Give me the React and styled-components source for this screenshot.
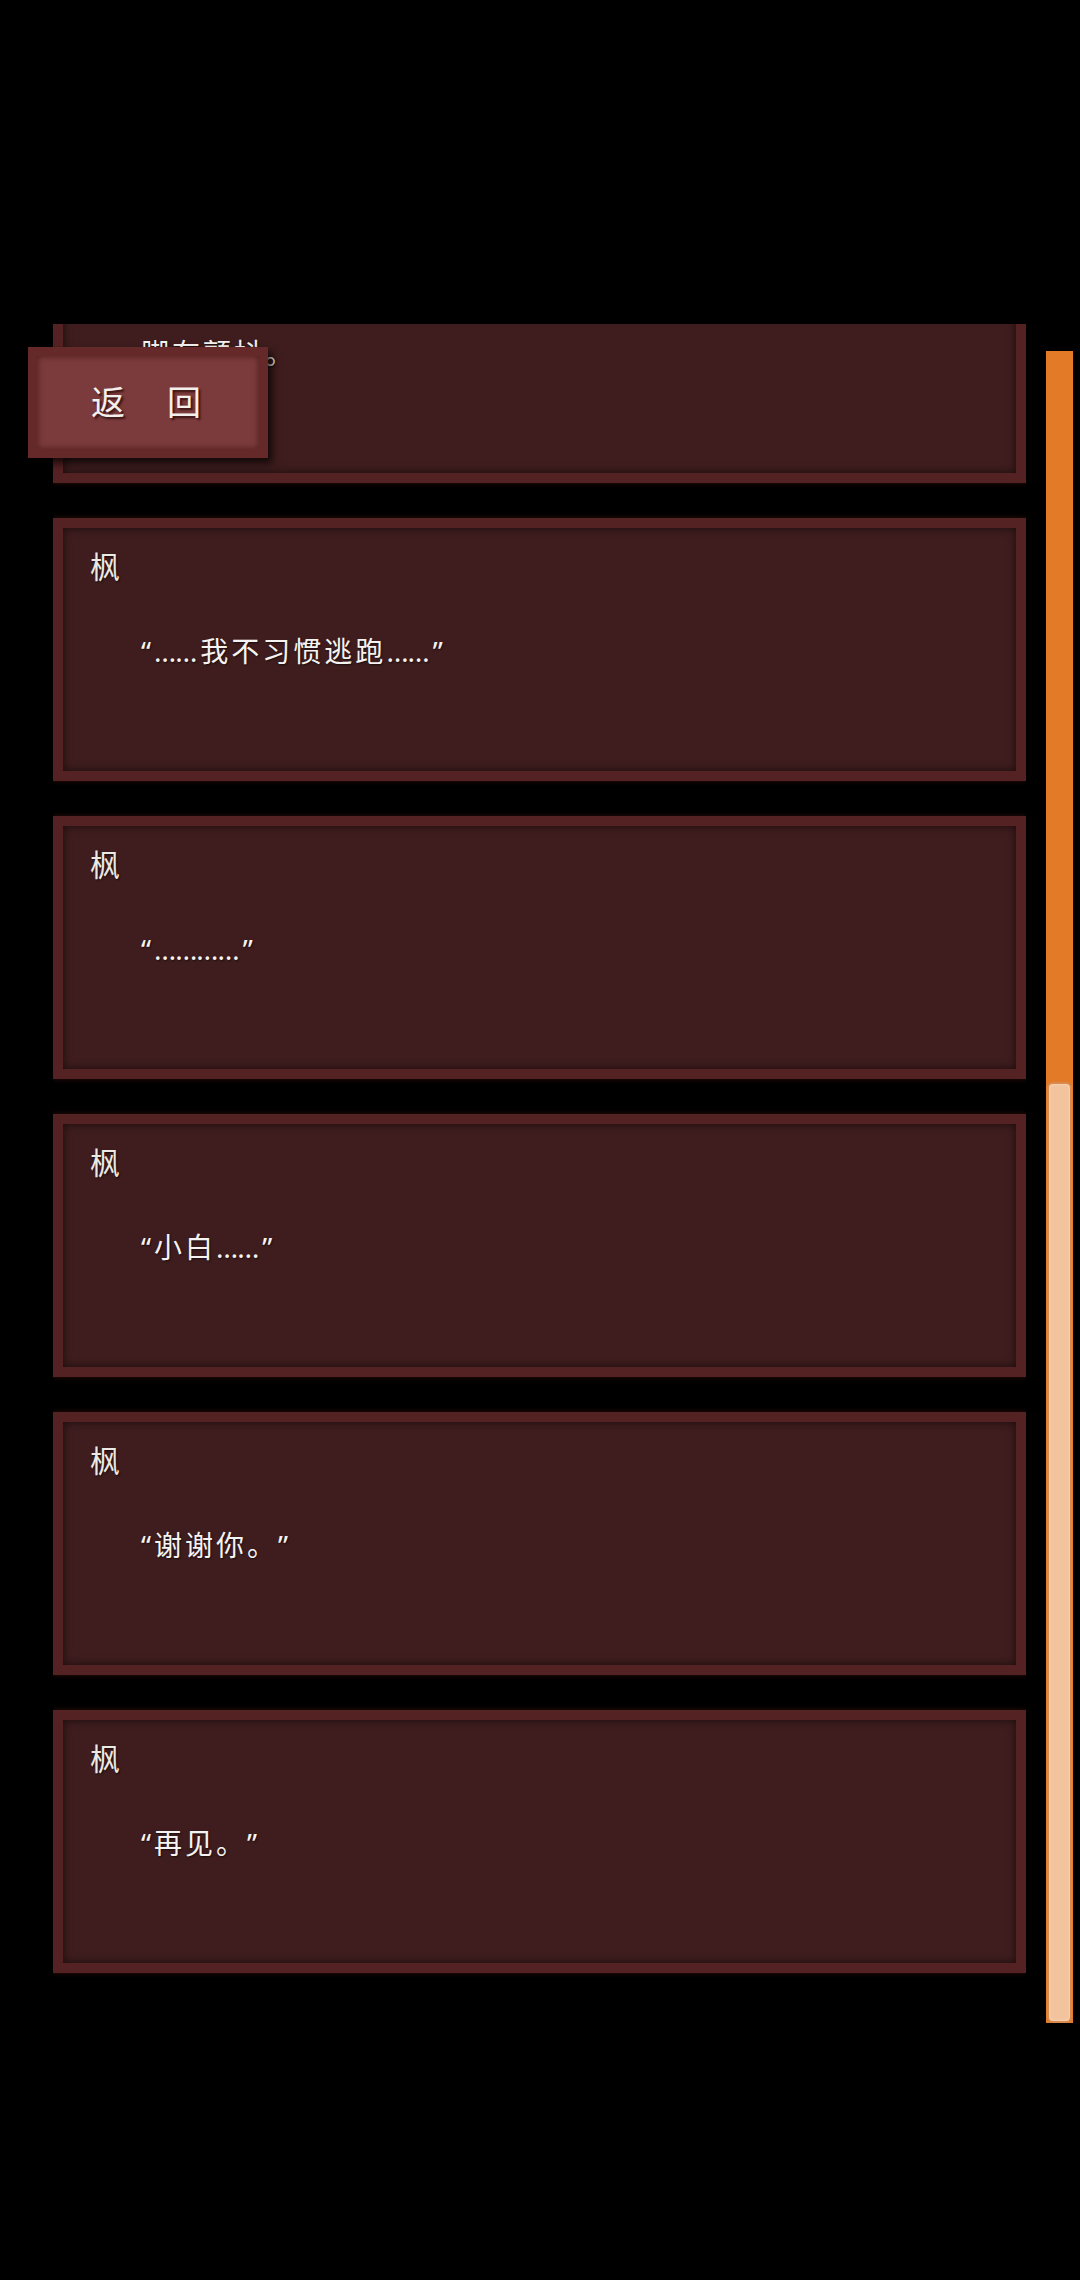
import React from 'react';
import styled, { createGlobalStyle } from 'styled-components';

const Global = createGlobalStyle`
  html, body { margin: 0; padding: 0; background: #000; }
  body {
    width: 1080px;
    height: 2280px;
    overflow: hidden;
    font-family: "Noto Sans", "Noto Sans CJK SC", sans-serif;
  }
`;

const Screen = styled.div`
  position: relative;
  width: 1080px;
  height: 2280px;
  background: #000;
`;

const Body = styled.div`
  display: flex;
  align-items: flex-start;
  gap: 20px;
  padding: 324px 0 0 53px;
`;

const LogList = styled.div`
  width: 973px;
  height: 1666px;
  box-sizing: border-box;
  padding-bottom: 17px;
  overflow: hidden;
  display: flex;
  flex-direction: column;
  justify-content: flex-end;
  gap: 35px;
`;

const Card = styled.div`
  flex-shrink: 0;
  height: 263px;
  box-sizing: border-box;
  border: 10px solid #552223;
  background: #3f1d1e;
  box-shadow: 0 0 5px rgba(110, 35, 35, 0.45), inset 0 0 10px rgba(0, 0, 0, 0.6);
  padding: 21px 20px 0 27px;
`;

const Name = styled.div`
  font-size: 30px;
  line-height: 36px;
  height: 36px;
  color: #ece8e4;
  text-shadow: 1px 1px 2px rgba(0, 0, 0, 0.7);
`;

const Line = styled.div`
  margin: 46px 0 0 51px;
  font-size: 28px;
  line-height: 40px;
  letter-spacing: 3px;
  text-spacing-trim: space-all;
  color: #f5f3f1;
  text-shadow: 1px 1px 2px rgba(0, 0, 0, 0.6);
`;

const Dots = styled.span`
  letter-spacing: -1px;
  margin-right: 4px;
`;

const ScrollTrack = styled.div`
  margin-top: 27px;
  width: 27px;
  height: 1672px;
  display: flex;
  flex-direction: column;
  background: #e37a28;
`;

const TrackFill = styled.div`
  flex: 1;
`;

const Thumb = styled.div`
  height: 941px;
  box-sizing: border-box;
  margin: 0 1px;
  background: #f2c39d;
  border: 2px solid #d98b4f;
  border-radius: 6px;
  box-shadow: inset 0 0 3px rgba(255, 235, 215, 0.8);
`;

const BackButton = styled.button`
  position: absolute;
  left: 28px;
  top: 347px;
  width: 240px;
  height: 111px;
  box-sizing: border-box;
  border: 9px solid #66292a;
  background: #7b3a3b;
  box-shadow: 4px 5px 8px rgba(0, 0, 0, 0.75), inset 0 0 6px rgba(40, 8, 8, 0.6);
  display: flex;
  align-items: center;
  justify-content: center;
  padding: 0 0 4px 0;
  font-family: "Noto Sans CJK SC", sans-serif;
  font-size: 34px;
  letter-spacing: 4px;
  color: #f3efed;
  text-shadow: 2px 2px 2px rgba(40, 10, 10, 0.8);
  cursor: pointer;
`;

const entries = [
  { name: '枫', text: '脚在颤抖。' },
  { name: '枫', text: '“……我不习惯逃跑……”' },
  { name: '枫', text: '“…………”' },
  { name: '枫', text: '“小白……”' },
  { name: '枫', text: '“谢谢你。”' },
  { name: '枫', text: '“再见。”' },
];

function renderText(text) {
  return text.split(/(…+)/).map((part, i) =>
    /^…+$/.test(part) ? <Dots key={i}>{part}</Dots> : <React.Fragment key={i}>{part}</React.Fragment>
  );
}

export default function App() {
  return (
    <Screen>
      <Global />
      <Body>
        <LogList>
          {entries.map((e, i) => (
            <Card key={i}>
              <Name>{e.name}</Name>
              <Line>{renderText(e.text)}</Line>
            </Card>
          ))}
        </LogList>
        <ScrollTrack>
          <TrackFill />
          <Thumb />
        </ScrollTrack>
      </Body>
      <BackButton>返　回</BackButton>
    </Screen>
  );
}
